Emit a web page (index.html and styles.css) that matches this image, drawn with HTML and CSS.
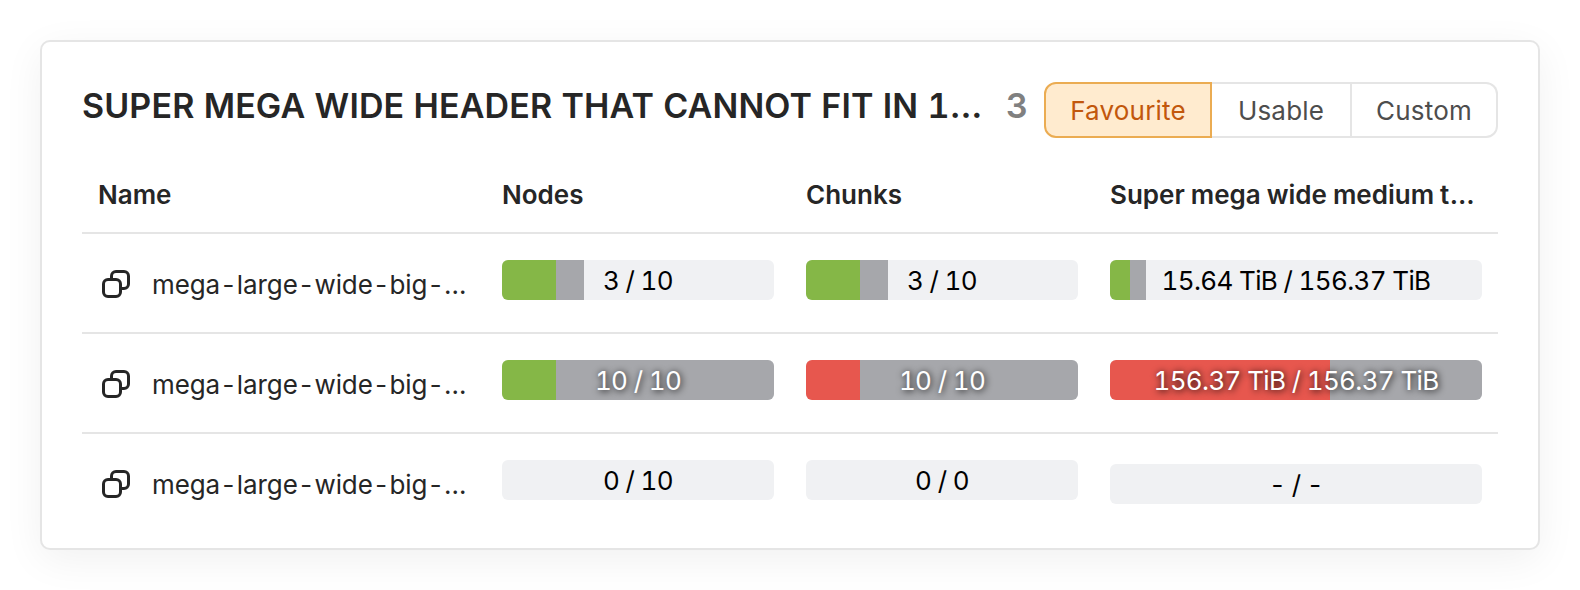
FILE: index.html
```html
<!DOCTYPE html>
<html lang="en">
<head>
<meta charset="utf-8">
<title>Resources</title>
<link rel="stylesheet" href="styles.css">
</head>
<body>
<svg width="0" height="0" class="sprite" aria-hidden="true">
  <symbol id="copy" viewBox="0 0 28 28">
    <g fill="none" stroke="currentColor" stroke-width="3">
      <path d="M9.5 9V6a4.5 4.5 0 0 1 4.5-4.5h8A4.5 4.5 0 0 1 26.5 6v8a4.5 4.5 0 0 1-4.5 4.5h-3"/>
      <rect x="1.5" y="9.5" width="17" height="17" rx="4.5"/>
    </g>
  </symbol>
</svg>
<main class="card">
  <header class="head">
    <h1 class="title">SUPER MEGA WIDE HEADER THAT CANNOT FIT IN 100 PERCENT OF THE CARD</h1>
    <span class="count">3</span>
    <div class="toggle">
      <button class="option active">Favourite</button>
      <button class="option">Usable</button>
      <button class="option">Custom</button>
    </div>
  </header>
  <section class="table">
    <div class="row labels">
      <div class="label">Name</div><div class="label">Nodes</div><div class="label">Chunks</div><div class="label">Super mega wide medium type header</div>
    </div>
    <div class="row">
      <div class="name"><svg class="icon"><use href="#copy"/></svg><span class="text">mega-large-wide-big-name</span></div>
      <div class="bar"><i class="seg green" style="width:20%"></i><i class="seg gray" style="width:10%"></i><span class="value">3 / 10</span></div>
      <div class="bar"><i class="seg green" style="width:20%"></i><i class="seg gray" style="width:10%"></i><span class="value">3 / 10</span></div>
      <div class="bar"><i class="seg green" style="width:5.5%"></i><i class="seg gray" style="width:4.3%"></i><span class="value">15.64 TiB / 156.37 TiB</span></div>
    </div>
    <div class="row">
      <div class="name"><svg class="icon"><use href="#copy"/></svg><span class="text">mega-large-wide-big-name</span></div>
      <div class="bar"><i class="seg green" style="width:20%"></i><i class="seg gray" style="width:80%"></i><span class="value light">10 / 10</span></div>
      <div class="bar"><i class="seg red" style="width:20%"></i><i class="seg gray" style="width:80%"></i><span class="value light">10 / 10</span></div>
      <div class="bar"><i class="seg red" style="width:59.1%"></i><i class="seg gray" style="width:40.9%"></i><span class="value light">156.37 TiB / 156.37 TiB</span></div>
    </div>
    <div class="row">
      <div class="name"><svg class="icon"><use href="#copy"/></svg><span class="text">mega-large-wide-big-name</span></div>
      <div class="bar"><span class="value">0 / 10</span></div>
      <div class="bar"><span class="value">0 / 0</span></div>
      <div class="bar empty"><span class="value">- / -</span></div>
    </div>
  </section>
</main>
</body>
</html>
```
FILE: styles.css
```css
* { box-sizing: border-box; }
body {
  margin: 0;
  padding: 40px;
  background: #fff;
  color: #262626;
  font: 26px/36px Inter, sans-serif;
  font-variant-numeric: tabular-nums;
}
.sprite { position: absolute; }
.card {
  height: 510px;
  padding: 40px;
  border: 2px solid #e5e5e5;
  border-radius: 10px;
  background: #fff;
  box-shadow: 0 10px 40px rgba(0, 0, 0, 0.06);
}
.head { display: flex; align-items: flex-start; height: 76px; }
.title {
  width: 902px;
  margin: 0;
  overflow: hidden;
  white-space: nowrap;
  text-overflow: ellipsis;
  font-size: 34px;
  font-weight: 600;
  line-height: 48px;
  letter-spacing: 0.12px;
}
.count {
  width: 38px;
  margin-left: 22px;
  color: #808080;
  font-size: 34px;
  font-weight: 600;
  line-height: 48px;
}
.toggle { display: flex; height: 56px; }
.option {
  width: 140px;
  height: 56px;
  margin: 0;
  padding: 1px 0 0;
  border: 2px solid #e5e5e5;
  border-left: 0;
  background: #fff;
  color: #4d4d4d;
  font: 26px/51px Inter, sans-serif;
  letter-spacing: 0.2px;
}
.option:last-child { width: 146px; border-radius: 0 12px 12px 0; }
.option.active {
  width: 168px;
  border: 2px solid #ebac52;
  border-radius: 12px 0 0 12px;
  background: #ffebcf;
  color: #c2570c;
}
.row {
  display: grid;
  grid-template-columns: 372px 272px 272px 372px;
  column-gap: 32px;
  height: 100px;
  padding: 26px 16px 0;
  border-bottom: 2px solid #e5e5e5;
}
.row:last-child { border-bottom: 0; }
.labels { height: 76px; padding-top: 19px; }
.label {
  overflow: hidden;
  white-space: nowrap;
  text-overflow: ellipsis;
  font-weight: 600;
  word-spacing: -1px;
}
.name { display: flex; min-width: 0; padding-top: 7px; }
.icon { flex: none; width: 28px; height: 28px; margin: 3px 22px 0 4px; }
.text {
  overflow: hidden;
  white-space: nowrap;
  text-overflow: ellipsis;
  letter-spacing: -0.1px;
}
.bar {
  display: flex;
  position: relative;
  height: 40px;
  overflow: hidden;
  border-radius: 6px;
  background: #f0f1f3;
}
.empty { margin-top: 4px; }
.seg { flex: none; height: 100%; }
.green { background: #85b747; }
.gray { background: #a6a7ab; }
.red { background: #e7574e; }
.value {
  position: absolute;
  inset: 0;
  color: #000;
  line-height: 41px;
  text-align: center;
  letter-spacing: -0.65px;
}
.light { color: #fff; text-shadow: 1px 1px 7px #000; }
```
